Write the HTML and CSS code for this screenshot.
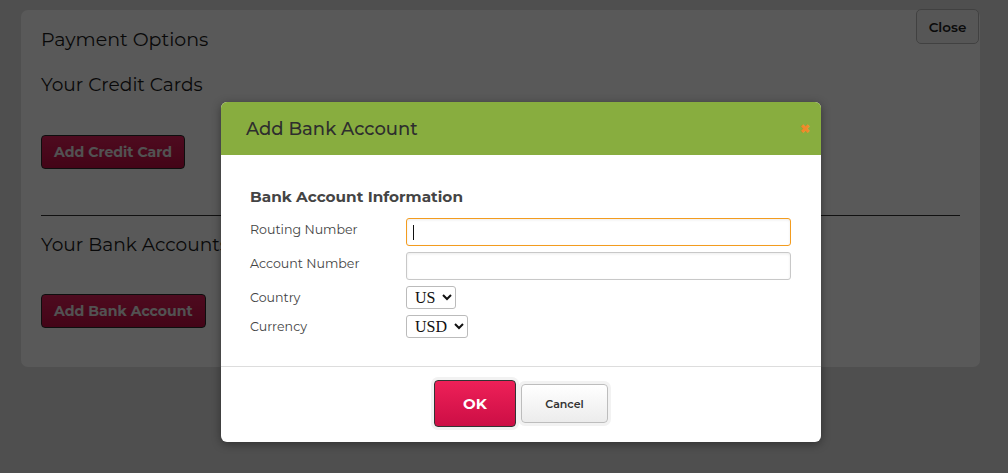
FILE: index.html
```html
<!DOCTYPE html>
<html>
<head>
<meta charset="utf-8">
<link rel="stylesheet" href="styles.css">
</head>
<body>
<div class="page">
  <div class="panel">
    <h1 class="panel-title">Payment Options</h1>
    <h2 class="section-title">Your Credit Cards</h2>
    <button class="btn-primary">Add Credit Card</button>
    <hr class="divider">
    <h2 class="section-title section-bank">Your Bank Accounts</h2>
    <button class="btn-primary btn-bank">Add Bank Account</button>
  </div>
  <button class="close-btn">Close</button>
</div>
<div class="overlay"></div>
<div class="modal">
  <div class="modal-header">
    <span class="modal-title">Add Bank Account</span>
    <span class="modal-x">&#10006;</span>
  </div>
  <div class="modal-body">
    <h3 class="form-title">Bank Account Information</h3>
    <div class="form-grid">
      <label class="lbl">Routing Number</label>
      <div class="field"><input class="txt focused" type="text"><span class="caret"></span></div>
      <label class="lbl">Account Number</label>
      <div class="field"><input class="txt" type="text"></div>
      <label class="lbl">Country</label>
      <div class="field"><select class="sel"><option>US</option></select></div>
      <label class="lbl">Currency</label>
      <div class="field"><select class="sel"><option>USD</option></select></div>
    </div>
  </div>
  <div class="modal-footer">
    <button class="btn-ok">OK</button>
    <button class="btn-cancel">Cancel</button>
  </div>
</div>
</body>
</html>
```
FILE: styles.css
```css
* { box-sizing: border-box; }
html, body { margin: 0; padding: 0; }
body {
  width: 1008px;
  height: 473px;
  overflow: hidden;
  background: #e3e3e3;
  font-family: "Montserrat", "Lato", "Open Sans", sans-serif;
  position: relative;
}
.page {
  position: relative;
  padding: 10px 28px 0 21px;
}
.panel {
  width: 959px;
  height: 357px;
  background: #fff;
  border-radius: 7px;
  padding: 16px 20px 0 20px;
}
.panel-title {
  margin: 0;
  font-size: 19px;
  font-weight: 400;
  color: #1a1a1a;
  line-height: 28px;
}
.section-title {
  margin: 17px 0 0 0;
  font-size: 18.6px;
  font-weight: 400;
  color: #1a1a1a;
  line-height: 28px;
}
.section-bank { margin-top: 15px; }
.btn-primary {
  display: block;
  margin-top: 36px;
  height: 34px;
  padding: 0 12px;
  font-family: inherit;
  font-size: 14.1px;
  font-weight: 700;
  color: #eaeaea;
  background: linear-gradient(#e0205a, #c10d43);
  border: 1px solid #2a2a2a;
  border-radius: 4px;
}
.btn-bank { margin-top: 35px; }
.divider {
  margin: 46px 0 0 0;
  border: 0;
  border-top: 1px solid #333;
}
.close-btn {
  position: absolute;
  top: 9px;
  right: 29px;
  width: 63px;
  height: 35px;
  font-family: inherit;
  font-size: 13.5px;
  font-weight: 600;
  color: #222;
  background: #f7f7f7;
  border: 1px solid #bbb;
  border-radius: 5px;
}
.overlay {
  position: absolute;
  inset: 0;
  background: rgba(0, 0, 0, 0.65);
}
.modal {
  position: absolute;
  left: 221px;
  top: 102px;
  width: 600px;
  height: 340px;
  background: #fff;
  border-radius: 6px;
  overflow: hidden;
  box-shadow: 0 2px 10px rgba(0,0,0,0.4);
}
.modal-header {
  height: 53px;
  background: #88ad3f;
  display: flex;
  align-items: center;
  justify-content: space-between;
  padding: 0 11px 0 25px;
}
.modal-title {
  font-size: 18px;
  font-weight: 500;
  color: #2e2e2e;
}
.modal-x {
  color: #f0892a;
  font-size: 12px;
  font-weight: 700;
}
.modal-body {
  padding: 31px 30px 0 29px;
  height: 211px;
}
.form-title {
  margin: 0 0 10px 0;
  font-size: 15.3px;
  font-weight: 700;
  color: #444;
  line-height: 22px;
}
.form-grid {
  display: grid;
  grid-template-columns: 156px 385px;
  row-gap: 6px;
  align-items: center;
}
.lbl {
  font-size: 12.6px;
  color: #444;
  align-self: start;
  line-height: 20px;
  padding-top: 2px;
}
.field { position: relative; display: flex; }
.txt {
  width: 385px;
  height: 28px;
  border: 1px solid #c8c8c8;
  border-radius: 3px;
  box-shadow: inset 0 1px 3px rgba(0,0,0,0.08);
  outline: none;
  padding: 0 6px;
}
.txt.focused { border-color: #f39c1f; }
.caret {
  position: absolute;
  left: 7px;
  top: 7px;
  width: 1px;
  height: 15px;
  background: #111;
}
.sel {
  height: 23px;
  font-family: "Liberation Serif", serif;
  font-size: 16px;
  color: #111;
  background: #fff;
  border: 1px solid #bbb;
  border-radius: 3px;
  padding: 0 3px 0 4px;
}
.modal-footer {
  border-top: 1px solid #ddd;
  height: 76px;
  display: flex;
  align-items: flex-start;
  padding: 13px 0 0 213px;
  gap: 5px;
}
.btn-ok {
  width: 82px;
  height: 47px;
  font-family: inherit;
  font-size: 15px;
  font-weight: 700;
  color: #fff;
  background: linear-gradient(#ee2058, #cc0e45);
  border: 1px solid #333;
  border-radius: 4px;
  box-shadow: 0 0 0 3px #f2f2f2;
}
.btn-cancel {
  margin-top: 4px;
  width: 87px;
  height: 39px;
  font-family: inherit;
  font-size: 11px;
  font-weight: 600;
  color: #333;
  background: linear-gradient(#fff, #ececec);
  border: 1px solid #bdbdbd;
  border-radius: 4px;
  box-shadow: 0 0 0 3px #f2f2f2;
}
```
